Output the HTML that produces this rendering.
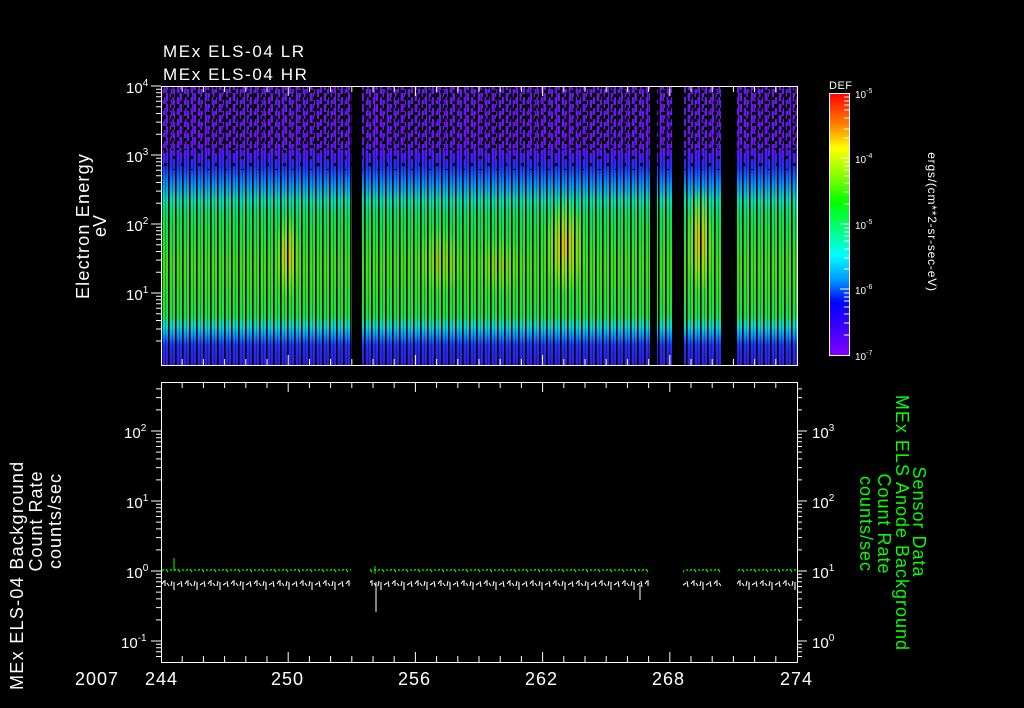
<!DOCTYPE html>
<html><head><meta charset="utf-8"><style>
html,body{margin:0;padding:0;background:#000;}
svg{display:block;}
text{font-family:"Liberation Sans",sans-serif;fill:#fff;}
</style></head><body>
<svg width="1024" height="708" viewBox="0 0 1024 708" xmlns="http://www.w3.org/2000/svg">
<defs>
<linearGradient id="spec" x1="0" y1="86" x2="0" y2="365" gradientUnits="userSpaceOnUse">
<stop offset="0" stop-color="#6a18f0"/>
<stop offset="0.20" stop-color="#7010ff"/>
<stop offset="0.25" stop-color="#5018ff"/>
<stop offset="0.29" stop-color="#2030ff"/>
<stop offset="0.35" stop-color="#0090ff"/>
<stop offset="0.41" stop-color="#00e0b0"/>
<stop offset="0.47" stop-color="#10e050"/>
<stop offset="0.65" stop-color="#40e020"/>
<stop offset="0.82" stop-color="#20e040"/>
<stop offset="0.86" stop-color="#00e0d0"/>
<stop offset="0.89" stop-color="#00a0ff"/>
<stop offset="0.93" stop-color="#2030f8"/>
<stop offset="1" stop-color="#3020e0"/>
</linearGradient>
<radialGradient id="hot">
<stop offset="0" stop-color="#ffb000" stop-opacity="0.9"/>
<stop offset="0.5" stop-color="#e0e000" stop-opacity="0.5"/>
<stop offset="1" stop-color="#c0ff00" stop-opacity="0"/>
</radialGradient>
<pattern id="stripe" x="161" y="0" width="7" height="10" patternUnits="userSpaceOnUse">
<rect x="0" y="0" width="1.6" height="10" fill="#000"/>
<rect x="4" y="0" width="1" height="10" fill="#000" opacity="0.35"/>
</pattern>
<pattern id="speck" x="161" y="86" width="13" height="11" patternUnits="userSpaceOnUse">
<rect x="0" y="0" width="3" height="3" fill="#000"/>
<rect x="6" y="4" width="4" height="3" fill="#000"/>
<rect x="2" y="7" width="3" height="4" fill="#000"/>
<rect x="9" y="0" width="2" height="3" fill="#000"/>
<rect x="10" y="8" width="3" height="3" fill="#000"/>
</pattern>
<pattern id="speck2" x="164" y="150" width="17" height="13" patternUnits="userSpaceOnUse">
<rect x="0" y="0" width="3" height="3" fill="#000"/>
<rect x="9" y="6" width="3" height="3" fill="#000"/>
</pattern>
<pattern id="gz" x="161" y="560" width="12" height="20" patternUnits="userSpaceOnUse">
<path d="M1 11 l2 -2 M5 9 l2 3 M9 10 l2 0" stroke="#00ff00" stroke-width="1.2" fill="none"/>
</pattern>
<pattern id="wz" x="161" y="574" width="23" height="24" patternUnits="userSpaceOnUse">
<path d="M1 10 l2 -3 M4 6 l0 6 M6 9 l2 3 M10 12 l1 -5 M13 8 l0 8 M16 11 l3 -2 M20 7 l1 6" stroke="#fff" stroke-width="1.1" fill="none"/>
</pattern>
<linearGradient id="cbar" x1="0" y1="93" x2="0" y2="355" gradientUnits="userSpaceOnUse">
<stop offset="0" stop-color="#ff0000"/>
<stop offset="0.12" stop-color="#ff8000"/>
<stop offset="0.21" stop-color="#ffff00"/>
<stop offset="0.32" stop-color="#80ff00"/>
<stop offset="0.42" stop-color="#00ff00"/>
<stop offset="0.55" stop-color="#00ffa0"/>
<stop offset="0.62" stop-color="#00ffff"/>
<stop offset="0.72" stop-color="#0090ff"/>
<stop offset="0.80" stop-color="#0000ff"/>
<stop offset="1" stop-color="#8000ff"/>
</linearGradient>
</defs>

<!-- spectrogram -->
<rect x="161" y="86" width="636" height="279" fill="url(#spec)"/>
<ellipse cx="288" cy="255" rx="12" ry="45" fill="url(#hot)"/>
<ellipse cx="565" cy="245" rx="22" ry="50" fill="url(#hot)"/>
<ellipse cx="700" cy="240" rx="14" ry="55" fill="url(#hot)"/>
<ellipse cx="440" cy="260" rx="25" ry="35" fill="url(#hot)" opacity="0.5"/>
<ellipse cx="500" cy="265" rx="25" ry="30" fill="url(#hot)" opacity="0.4"/>
<rect x="161" y="86" width="636" height="64" fill="url(#speck)"/>
<rect x="161" y="150" width="636" height="20" fill="url(#speck2)"/>
<rect x="161" y="86" width="636" height="279" fill="url(#stripe)"/>
<rect x="352" y="86" width="10" height="279" fill="#000"/>
<rect x="650" y="86" width="7" height="279" fill="#000"/>
<rect x="672" y="86" width="12" height="279" fill="#000"/>
<rect x="722" y="86" width="15" height="279" fill="#000"/>

<!-- top panel frame & ticks -->
<rect x="161.5" y="86.5" width="636" height="279" fill="none" stroke="#fff"/>
<path stroke="#fff" fill="none" d="
M151 86h10 M151 155h10 M151 224h10 M151 293h10
M156 272.2h5 M156 260.1h5 M156 251.5h5 M156 244.8h5 M156 239.3h5 M156 234.7h5 M156 230.7h5 M156 227.2h5
M156 203.2h5 M156 191.1h5 M156 182.5h5 M156 175.8h5 M156 170.3h5 M156 165.7h5 M156 161.7h5 M156 158.2h5
M156 134.2h5 M156 122.1h5 M156 113.5h5 M156 106.8h5 M156 101.3h5 M156 96.7h5 M156 92.7h5 M156 89.2h5
M156 296.2h5 M156 299.7h5 M156 303.7h5 M156 308.3h5 M156 313.8h5 M156 320.5h5 M156 329h5 M156 341h5
M182.2 86v6 M203.4 86v6 M224.6 86v6 M245.8 86v6 M267 86v6 M288.2 86v10 M309.4 86v6 M330.6 86v6 M351.8 86v6 M373 86v6 M394.2 86v6 M415.4 86v10 M436.6 86v6 M457.8 86v6 M479 86v6 M500.2 86v6 M521.4 86v6 M542.6 86v10 M563.8 86v6 M585 86v6 M606.2 86v6 M627.4 86v6 M648.6 86v6 M669.8 86v10 M691 86v6 M712.2 86v6 M733.4 86v6 M754.6 86v6 M775.8 86v6
M182.2 365v-6 M203.4 365v-6 M224.6 365v-6 M245.8 365v-6 M267 365v-6 M288.2 365v-10 M309.4 365v-6 M330.6 365v-6 M351.8 365v-6 M373 365v-6 M394.2 365v-6 M415.4 365v-10 M436.6 365v-6 M457.8 365v-6 M479 365v-6 M500.2 365v-6 M521.4 365v-6 M542.6 365v-10 M563.8 365v-6 M585 365v-6 M606.2 365v-6 M627.4 365v-6 M648.6 365v-6 M669.8 365v-10 M691 365v-6 M712.2 365v-6 M733.4 365v-6 M754.6 365v-6 M775.8 365v-6
"/>
<g font-size="15">
<text x="126" y="93">10<tspan font-size="10" dy="-7">4</tspan></text>
<text x="126" y="162">10<tspan font-size="10" dy="-7">3</tspan></text>
<text x="126" y="231">10<tspan font-size="10" dy="-7">2</tspan></text>
<text x="126" y="300">10<tspan font-size="10" dy="-7">1</tspan></text>
</g>
<text x="163" y="57" font-size="17" letter-spacing="1.6">MEx ELS-04 LR</text>
<text x="163" y="80" font-size="17" letter-spacing="1.6">MEx ELS-04 HR</text>
<text transform="translate(89,226) rotate(-90)" font-size="18" text-anchor="middle" letter-spacing="1.2">Electron Energy</text>
<text transform="translate(106,226) rotate(-90)" font-size="18" text-anchor="middle">eV</text>

<!-- colorbar -->
<rect x="829.5" y="93.5" width="20" height="262" fill="url(#cbar)" stroke="#fff"/>
<path stroke="#fff" d="M844 97h5 M844 101h5 M844 105h5 M844 110h5 M844 118h5 M844 129h5 M844 138h5 M840 158h9 M844 162h5 M844 166h5 M844 170h5 M844 176h5 M844 183h5 M844 192h5 M844 204h5 M840 224h9 M844 228h5 M844 232h5 M844 236h5 M844 241h5 M844 249h5 M844 258h5 M844 269h5 M840 289h9 M844 293h5 M844 297h5 M844 301h5 M844 307h5 M844 314h5 M844 323h5 M844 335h5"/>
<text x="829" y="89" font-size="11" letter-spacing="0.5">DEF</text>
<g font-size="10">
<text x="855" y="98">10<tspan font-size="7" dy="-5">-5</tspan></text>
<text x="855" y="163">10<tspan font-size="7" dy="-5">-4</tspan></text>
<text x="855" y="229">10<tspan font-size="7" dy="-5">-5</tspan></text>
<text x="855" y="294">10<tspan font-size="7" dy="-5">-6</tspan></text>
<text x="855" y="360">10<tspan font-size="7" dy="-5">-7</tspan></text>
</g>
<text transform="translate(928,222) rotate(90)" font-size="12" text-anchor="middle" letter-spacing="0.8">ergs/(cm**2-sr-sec-eV)</text>

<!-- bottom panel -->
<rect x="161" y="560" width="190" height="20" fill="url(#gz)"/>
<rect x="370" y="560" width="280" height="20" fill="url(#gz)"/>
<rect x="683" y="560" width="38" height="20" fill="url(#gz)"/>
<rect x="737" y="560" width="60" height="20" fill="url(#gz)"/>
<rect x="161" y="574" width="190" height="24" fill="url(#wz)"/>
<rect x="370" y="574" width="280" height="24" fill="url(#wz)"/>
<rect x="683" y="574" width="38" height="24" fill="url(#wz)"/>
<rect x="737" y="574" width="60" height="24" fill="url(#wz)"/>
<path stroke="#00ff00" d="M174 558v12 M375 566v8" />
<path stroke="#fff" d="M376 582v30 M640 585v15" />

<rect x="161.5" y="382.5" width="636" height="280" fill="none" stroke="#fff"/>
<path stroke="#fff" fill="none" d="
M151 431h10 M151 501h10 M151 571h10 M151 641h10
M156 619.9h5 M156 607.6h5 M156 598.9h5 M156 592.1h5 M156 586.5h5 M156 581.8h5 M156 577.8h5 M156 574.2h5
M156 549.9h5 M156 537.6h5 M156 528.9h5 M156 522.1h5 M156 516.5h5 M156 511.8h5 M156 507.8h5 M156 504.2h5
M156 479.9h5 M156 467.6h5 M156 458.9h5 M156 452.1h5 M156 446.5h5 M156 441.8h5 M156 437.8h5 M156 434.2h5
M156 409.9h5 M156 397.6h5 M156 388.9h5 M156 644.2h5 M156 647.8h5 M156 651.8h5 M156 656.5h5
M797 431h10 M797 501h10 M797 571h10 M797 641h10
M797 619.9h5 M797 607.6h5 M797 598.9h5 M797 592.1h5 M797 586.5h5 M797 581.8h5 M797 577.8h5 M797 574.2h5
M797 549.9h5 M797 537.6h5 M797 528.9h5 M797 522.1h5 M797 516.5h5 M797 511.8h5 M797 507.8h5 M797 504.2h5
M797 479.9h5 M797 467.6h5 M797 458.9h5 M797 452.1h5 M797 446.5h5 M797 441.8h5 M797 437.8h5 M797 434.2h5
M797 409.9h5 M797 397.6h5 M797 388.9h5 M797 644.2h5 M797 647.8h5 M797 651.8h5 M797 656.5h5
M182.2 382v6 M203.4 382v6 M224.6 382v6 M245.8 382v6 M267 382v6 M288.2 382v10 M309.4 382v6 M330.6 382v6 M351.8 382v6 M373 382v6 M394.2 382v6 M415.4 382v10 M436.6 382v6 M457.8 382v6 M479 382v6 M500.2 382v6 M521.4 382v6 M542.6 382v10 M563.8 382v6 M585 382v6 M606.2 382v6 M627.4 382v6 M648.6 382v6 M669.8 382v10 M691 382v6 M712.2 382v6 M733.4 382v6 M754.6 382v6 M775.8 382v6
M182.2 662v-6 M203.4 662v-6 M224.6 662v-6 M245.8 662v-6 M267 662v-6 M288.2 662v-10 M309.4 662v-6 M330.6 662v-6 M351.8 662v-6 M373 662v-6 M394.2 662v-6 M415.4 662v-10 M436.6 662v-6 M457.8 662v-6 M479 662v-6 M500.2 662v-6 M521.4 662v-6 M542.6 662v-10 M563.8 662v-6 M585 662v-6 M606.2 662v-6 M627.4 662v-6 M648.6 662v-6 M669.8 662v-10 M691 662v-6 M712.2 662v-6 M733.4 662v-6 M754.6 662v-6 M775.8 662v-6
"/>
<g font-size="15">
<text x="124" y="438">10<tspan font-size="10" dy="-7">2</tspan></text>
<text x="126" y="508">10<tspan font-size="10" dy="-7">1</tspan></text>
<text x="126" y="578">10<tspan font-size="10" dy="-7">0</tspan></text>
<text x="121" y="648">10<tspan font-size="10" dy="-7">-1</tspan></text>
<text x="812" y="438">10<tspan font-size="10" dy="-7">3</tspan></text>
<text x="812" y="508">10<tspan font-size="10" dy="-7">2</tspan></text>
<text x="812" y="578">10<tspan font-size="10" dy="-7">1</tspan></text>
<text x="812" y="648">10<tspan font-size="10" dy="-7">0</tspan></text>
</g>
<g font-size="18" letter-spacing="1">
<text x="75" y="685">2007</text>
<text x="145" y="685">244</text>
<text x="271" y="685">250</text>
<text x="398" y="685">256</text>
<text x="525" y="685">262</text>
<text x="652" y="685">268</text>
<text x="780" y="685">274</text>
</g>
<text transform="translate(23,690) rotate(-90)" font-size="18" letter-spacing="1.3">MEx ELS-04 Background</text>
<text transform="translate(42,521) rotate(-90)" font-size="18" text-anchor="middle" letter-spacing="1">Count Rate</text>
<text transform="translate(61,521) rotate(-90)" font-size="18" text-anchor="middle" letter-spacing="1">counts/sec</text>
<g font-size="18" text-anchor="middle" letter-spacing="1">
<text transform="translate(913,522) rotate(90)" style="fill:#00ff00">Sensor Data</text>
<text transform="translate(896,523) rotate(90)" style="fill:#00ff00">MEx ELS Anode Background</text>
<text transform="translate(878,524) rotate(90)" style="fill:#00ff00">Count Rate</text>
<text transform="translate(860,524) rotate(90)" style="fill:#00ff00">counts/sec</text>
</g>
</svg>
</body></html>
